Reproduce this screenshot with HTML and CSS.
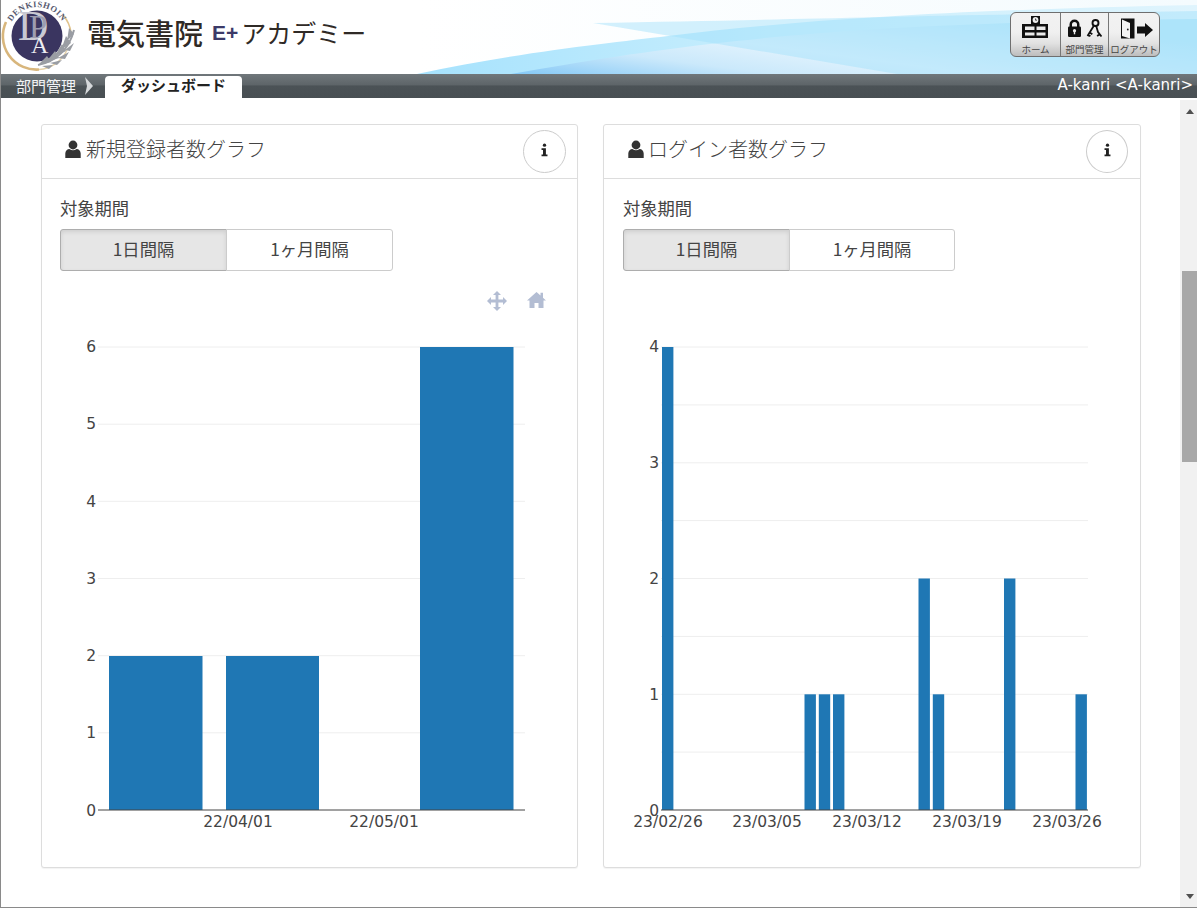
FILE: index.html
```html
<!DOCTYPE html>
<html lang="ja">
<head>
<meta charset="utf-8">
<title>ダッシュボード</title>
<link rel="stylesheet" href="styles.css">
</head>
<body>
<div class="page">
  <header class="masthead">
    <svg class="sky" viewBox="0 0 1197 74" preserveAspectRatio="none" aria-hidden="true">
      <defs>
        <linearGradient id="skyBase" x1="0" x2="1" y1="0" y2="0">
          <stop offset="0.35" stop-color="#ffffff"/>
          <stop offset="1" stop-color="#f4fbfe"/>
        </linearGradient>
        <linearGradient id="sweepA" x1="0" x2="1" y1="0" y2="0">
          <stop offset="0" stop-color="#a6e2fd"/>
          <stop offset="0.45" stop-color="#c8eefd"/>
          <stop offset="1" stop-color="#dff4fd"/>
        </linearGradient>
        <linearGradient id="sweepB" x1="0" x2="1" y1="1" y2="0.4">
          <stop offset="0" stop-color="#84c8f6"/>
          <stop offset="0.28" stop-color="#cbe9fb"/>
          <stop offset="0.5" stop-color="#e0f2fd"/>
          <stop offset="1" stop-color="#b8e7fa"/>
        </linearGradient>
      </defs>
      <rect width="1197" height="74" fill="url(#skyBase)"/>
      <path d="M417 74 C520 52 610 43 668 36 C800 20 950 10 1197 5 V74 Z" fill="url(#sweepA)"/>
      <path d="M511 74 C590 60 650 51 710 44 C820 31 950 22 1197 19 V74 Z" fill="url(#sweepB)"/>
      <path d="M593 23 C780 20 900 16 1197 11 V74 H897 Z" fill="#9fdffb" opacity="0.45"/>
    </svg>
    <div class="brand">
      <svg class="crest" viewBox="0 0 80 74" aria-hidden="true">
        <defs>
          <path id="crestArc" d="M7 36 A29 29 0 0 1 65 36"/>
        </defs>
        <path d="M5 22 A33.5 33.5 0 0 0 38 69.5" fill="none" stroke="#d8b67c" stroke-width="2.6"/>
        <path d="M38 69.5 A33.5 33.5 0 0 0 66 50" fill="none" stroke="#e7d3aa" stroke-width="1.5"/>
        <path d="M62 15 A33 33 0 0 1 70 33" fill="none" stroke="#e2c48c" stroke-width="1.6"/>
        <circle cx="36" cy="36" r="25.5" fill="#3a3560"/>
        <text class="crest-ring"><textPath href="#crestArc" startOffset="50%" text-anchor="middle">DENKISHOIN</textPath></text>
        <text class="crest-d" x="17" y="40">D</text>
        <text class="crest-p" x="28" y="38">P</text>
        <text class="crest-a" x="30" y="53">A</text>
        <path d="M37 65 C54 62 68 50 73 30" fill="none" stroke="#9a9da3" stroke-width="2"/>
        <path d="M37 65 l9 -9 l4 6 Z M45 62 l9 -11 l4 7 Z M53 57 l8 -13 l4 7 Z M60 50 l5 -14 l5 7 Z M66 41 l2 -13 l5 6 Z M41 66 l11 -1 l-4 4 Z M49 63 l12 -3 l-5 5 Z M57 58 l11 -6 l-4 7 Z M64 50 l9 -7 l-4 8 Z" fill="#9a9da3"/>
      </svg>
      <div class="brand-name">電気書院</div>
      <div class="brand-eplus">E+</div>
      <div class="brand-academy">アカデミー</div>
    </div>
    <nav class="quick">
      <a class="quick-item">
        <svg class="quick-icon" viewBox="0 0 49 24" aria-hidden="true">
          <path d="M20 1 H29 V9 H37 V23 H11 V9 H20 Z" fill="#111"/>
          <circle cx="24.5" cy="5" r="2.9" fill="#eee"/>
          <path d="M24.5 3.5 V5.2 H26" fill="none" stroke="#111" stroke-width="0.7"/>
          <path d="M14 11.5 H23.5 V15 H14 Z M25.5 11.5 H34.5 V15 H25.5 Z M14 17.5 H23.5 V20.5 H14 Z M25.5 17.5 H34.5 V20.5 H25.5 Z" fill="#ececec"/>
        </svg>
        <span class="quick-label">ホーム</span>
      </a>
      <a class="quick-item">
        <svg class="quick-icon" viewBox="0 0 47 24" aria-hidden="true">
          <path d="M8.5 12 V9.5 a5 5 0 0 1 10 0 V12 H16 V9.5 a2.5 2.5 0 0 0 -5 0 V12 Z" fill="#111"/>
          <rect x="7" y="11.5" width="13" height="10.5" rx="1.2" fill="#111"/>
          <circle cx="13.5" cy="15.7" r="1.6" fill="#eee"/>
          <rect x="12.8" y="15.7" width="1.4" height="3.6" fill="#eee"/>
          <circle cx="34.5" cy="8" r="3" fill="none" stroke="#111" stroke-width="1.9"/>
          <path d="M33 10.5 L26.5 21 M28.7 17.5 l2.6 1.7 M27.2 19.8 l2.2 1.4 M35.2 11 L37 17 L40.5 21.5 M38.5 19.4 l-2.4 1.7" fill="none" stroke="#111" stroke-width="1.8"/>
        </svg>
        <span class="quick-label">部門管理</span>
      </a>
      <a class="quick-item">
        <svg class="quick-icon" viewBox="0 0 50 24" aria-hidden="true">
          <path d="M12 3.5 H25.5 V23.5 H12 Z" fill="#111"/>
          <path d="M13 4.5 L21 8 V23.5 L13 21 Z" fill="#f4f4f4"/>
          <circle cx="18.8" cy="14.5" r="0.9" fill="#222"/>
          <path d="M28 11.5 H36 V8 L44 15 L36 22 V18.5 H28 Z" fill="#111"/>
        </svg>
        <span class="quick-label">ログアウト</span>
      </a>
    </nav>
  </header>
  <div class="crumbs">
    <span class="crumb">部門管理</span>
    <svg class="crumb-sep" viewBox="0 0 8 18" aria-hidden="true"><path d="M0 0 L8 9 L0 18 L2 9 Z" fill="#d5d8da"/></svg>
    <span class="crumb-current">ダッシュボード</span>
    <span class="user">A-kanri &lt;A-kanri&gt;</span>
  </div>
  <div class="workspace">
    <main class="content">
      <section class="card">
        <div class="card-head">
          <h2 class="card-title">
            <svg class="user-icon" viewBox="0 0 16 18" aria-hidden="true"><circle cx="8" cy="5" r="4.4" fill="#333"/><path d="M0.3 18 V13.5 C0.3 10.8 2.4 9 4.4 9 C6.8 10.7 9.2 10.7 11.6 9 C13.6 9 15.7 10.8 15.7 13.5 V18 Z" fill="#333"/></svg>
            新規登録者数グラフ
          </h2>
          <button class="info-btn" type="button">
            <svg class="info-icon" viewBox="0 0 8 15" aria-hidden="true"><circle cx="4" cy="2" r="1.9" fill="#222"/><path d="M0.6 5.5 H5.6 V12.5 H7.4 V14.6 H0.6 V12.5 H2.3 V7.6 H0.6 Z" fill="#222"/></svg>
          </button>
        </div>
        <div class="card-body">
          <div class="field-label">対象期間</div>
          <div class="segmented">
            <button class="seg seg-on" type="button">1日間隔</button>
            <button class="seg" type="button">1ヶ月間隔</button>
          </div>
          <svg class="chart" viewBox="0 0 498 588" aria-hidden="true">
            <g class="modebar">
              <path d="M437 8 l-4 4 h2.6 v4.6 h-4.6 v-2.6 l-4 4 l4 4 v-2.6 h4.6 v4.6 h-2.6 l4 4 l4 -4 h-2.6 v-4.6 h4.6 v2.6 l4 -4 l-4 -4 v2.6 h-4.6 v-4.6 h2.6 Z"/>
              <path d="M476.5 9 l-9.5 8.5 h2.5 v7.5 h5 v-5 h4 v5 h5 v-7.5 h2.5 l-3 -2.8 v-5 h-2.5 v2.8 Z"/>
            </g>
            <g class="grid">
              <line x1="38" x2="465" y1="64" y2="64"/>
              <line x1="38" x2="465" y1="141.2" y2="141.2"/>
              <line x1="38" x2="465" y1="218.3" y2="218.3"/>
              <line x1="38" x2="465" y1="295.5" y2="295.5"/>
              <line x1="38" x2="465" y1="372.7" y2="372.7"/>
              <line x1="38" x2="465" y1="449.8" y2="449.8"/>
            </g>
            <g class="bars">
              <rect x="49" y="373" width="93.5" height="154"/>
              <rect x="166" y="373" width="93" height="154"/>
              <rect x="360" y="64" width="93.5" height="463"/>
            </g>
            <line class="axis" x1="38" x2="465" y1="527" y2="527"/>
            <g class="ticks ticks-y">
              <text x="36" y="69">6</text>
              <text x="36" y="146">5</text>
              <text x="36" y="224">4</text>
              <text x="36" y="301">3</text>
              <text x="36" y="378">2</text>
              <text x="36" y="455">1</text>
              <text x="36" y="533">0</text>
            </g>
            <g class="ticks ticks-x">
              <text x="178" y="544">22/04/01</text>
              <text x="324" y="544">22/05/01</text>
            </g>
          </svg>
        </div>
      </section>
      <section class="card">
        <div class="card-head">
          <h2 class="card-title">
            <svg class="user-icon" viewBox="0 0 16 18" aria-hidden="true"><circle cx="8" cy="5" r="4.4" fill="#333"/><path d="M0.3 18 V13.5 C0.3 10.8 2.4 9 4.4 9 C6.8 10.7 9.2 10.7 11.6 9 C13.6 9 15.7 10.8 15.7 13.5 V18 Z" fill="#333"/></svg>
            ログイン者数グラフ
          </h2>
          <button class="info-btn" type="button">
            <svg class="info-icon" viewBox="0 0 8 15" aria-hidden="true"><circle cx="4" cy="2" r="1.9" fill="#222"/><path d="M0.6 5.5 H5.6 V12.5 H7.4 V14.6 H0.6 V12.5 H2.3 V7.6 H0.6 Z" fill="#222"/></svg>
          </button>
        </div>
        <div class="card-body">
          <div class="field-label">対象期間</div>
          <div class="segmented">
            <button class="seg seg-on" type="button">1日間隔</button>
            <button class="seg" type="button">1ヶ月間隔</button>
          </div>
          <svg class="chart" viewBox="0 0 498 588" aria-hidden="true">
            <g class="grid">
              <line x1="38" x2="465" y1="64" y2="64"/>
              <line x1="38" x2="465" y1="121.9" y2="121.9"/>
              <line x1="38" x2="465" y1="179.8" y2="179.8"/>
              <line x1="38" x2="465" y1="237.6" y2="237.6"/>
              <line x1="38" x2="465" y1="295.5" y2="295.5"/>
              <line x1="38" x2="465" y1="353.4" y2="353.4"/>
              <line x1="38" x2="465" y1="411.3" y2="411.3"/>
              <line x1="38" x2="465" y1="469.1" y2="469.1"/>
            </g>
            <g class="bars">
              <rect x="39" y="64" width="11.4" height="463"/>
              <rect x="181.5" y="411.3" width="11.4" height="115.7"/>
              <rect x="195.8" y="411.3" width="11.4" height="115.7"/>
              <rect x="210" y="411.3" width="11.4" height="115.7"/>
              <rect x="295.5" y="295.5" width="11.4" height="231.5"/>
              <rect x="309.8" y="411.3" width="11.4" height="115.7"/>
              <rect x="381" y="295.5" width="11.4" height="231.5"/>
              <rect x="452.5" y="411.3" width="11.4" height="115.7"/>
            </g>
            <line class="axis" x1="38" x2="465" y1="527" y2="527"/>
            <g class="ticks ticks-y">
              <text x="36" y="69">4</text>
              <text x="36" y="185">3</text>
              <text x="36" y="301">2</text>
              <text x="36" y="417">1</text>
              <text x="36" y="533">0</text>
            </g>
            <g class="ticks ticks-x">
              <text x="45" y="544">23/02/26</text>
              <text x="144" y="544">23/03/05</text>
              <text x="244" y="544">23/03/12</text>
              <text x="344" y="544">23/03/19</text>
              <text x="444" y="544">23/03/26</text>
            </g>
          </svg>
        </div>
      </section>
    </main>
    <div class="scrollbar">
      <span class="arrow-up"></span>
      <div class="scroll-track"><div class="scroll-thumb"></div></div>
      <span class="arrow-down"></span>
    </div>
  </div>
</div>
</body>
</html>
```
FILE: styles.css
```css
* { box-sizing: border-box; }
html, body { margin: 0; padding: 0; height: 100%; }
body {
  background: #fff;
  color: #333;
  font-family: "Liberation Sans", "Noto Sans CJK JP", sans-serif;
  overflow: hidden;
}
.page {
  width: 1197px;
  height: 908px;
  display: flex;
  flex-direction: column;
  border-left: 1px solid #8a8a8a;
  border-bottom: 1px solid #8a8a8a;
}

/* masthead */
.masthead {
  position: relative;
  height: 74px;
  flex: none;
  display: flex;
  align-items: flex-start;
  justify-content: space-between;
  padding: 12px 37px 0 0;
  overflow: hidden;
}
.sky { position: absolute; left: -1px; top: 0; width: 1197px; height: 74px; }
.brand {
  position: relative;
  display: flex;
  align-items: center;
  height: 50px;
  margin-top: -5px;
}
.crest { width: 80px; height: 74px; margin: -7px 6px -17px 0; flex: none; }
.crest-ring { font: 700 8.5px "Liberation Serif", serif; fill: #55586e; letter-spacing: 0.6px; }
.crest-d { font: 400 42px "Liberation Serif", serif; fill: #c9c9d3; }
.crest-p { font: 400 33px "Liberation Serif", serif; fill: #9d9db0; }
.crest-a { font: 400 24px "Liberation Serif", serif; fill: #eeeef2; }
.brand-name {
  font: 500 29px/1 "Noto Sans CJK JP", sans-serif;
  color: #2f2a26;
}
.brand-eplus {
  font: 700 21px/1 "Liberation Sans", sans-serif;
  color: #3c3a68;
  margin: 1px 3px 0 9px;
}
.brand-academy {
  font: 400 25px/1 "Noto Sans CJK JP", sans-serif;
  color: #2f2a26;
}
.quick {
  position: relative;
  display: flex;
  height: 45px;
  border: 1px solid #6f6f6f;
  border-radius: 6px;
  background: linear-gradient(#f2f2f2, #f0f0f0 45%, #e2e2e2 70%, #bdbdbd);
  overflow: hidden;
}
.quick-item {
  width: 48px;
  display: flex;
  flex-direction: column;
  align-items: center;
  border-left: 1px solid #777;
  padding-top: 2px;
}
.quick-item:first-child { width: 49px; border-left: 0; }
.quick-item:last-child { width: 51px; }
.quick-icon { height: 24px; width: 100%; flex: none; }
.quick-label {
  font: 400 9.5px/10px "Noto Sans CJK JP", sans-serif;
  color: #444;
  white-space: nowrap;
  margin-top: 5px;
}

/* breadcrumb bar */
.crumbs {
  height: 24px;
  flex: none;
  display: flex;
  align-items: flex-end;
  padding-left: 15px;
  background: linear-gradient(#70777b, #5e6569 45%, #4b5256 50%, #484f53);
  color: #fff;
  font: 400 15px/22px "Noto Sans CJK JP", sans-serif;
}
.crumb { color: #f2f4f5; height: 24px; line-height: 23px; }
.crumb-sep { width: 8px; height: 18px; margin: 0 12px 3px 9px; flex: none; }
.crumb-current {
  width: 137px;
  height: 22px;
  background: #fff;
  color: #222;
  font-weight: 700;
  font-size: 15px;
  line-height: 18px;
  text-align: center;
  border-radius: 4px 4px 0 0;
}
.user {
  margin-left: auto;
  padding-right: 4px;
  height: 24px;
  font: 400 15px/22px "DejaVu Sans", sans-serif;
  color: #fff;
}

/* working area */
.workspace {
  flex: 1;
  min-height: 0;
  display: flex;
}
.content {
  flex: 1;
  display: flex;
  gap: 25px;
  align-items: flex-start;
  padding: 26px 39px 0 40px;
}
.card {
  width: 537px;
  flex: none;
  height: 744px;
  border: 1px solid #ddd;
  border-radius: 3px;
  box-shadow: 0 1px 1px rgba(0, 0, 0, 0.05);
  background: #fff;
}
.card + .card { width: 538px; }
.card-head {
  height: 54px;
  border-bottom: 1px solid #ddd;
  display: flex;
  align-items: center;
  justify-content: space-between;
  padding: 0 11px 0 23px;
}
.card + .card .card-head { padding: 0 12px 0 24px; }
.card-title {
  margin: 0 0 5px;
  font: 300 20px/1.2 "Noto Sans CJK JP", sans-serif;
  color: #444;
  display: flex;
  align-items: center;
  gap: 5px;
}
.card + .card .card-title { gap: 4px; }
.user-icon { width: 16px; height: 18px; flex: none; }
.info-btn {
  width: 43px;
  height: 43px;
  padding: 0;
  border: 1px solid #ccc;
  border-radius: 50%;
  background: #fff;
  display: flex;
  align-items: center;
  justify-content: center;
}
.card + .card .info-btn { width: 42px; }
.info-icon { width: 7px; height: 14px; margin-top: -4px; }
.card-body { padding: 17px 18px 0; }
.card + .card .card-body { padding-left: 19px; }
.field-label {
  font: 400 17.3px/24px "Noto Sans CJK JP", sans-serif;
  color: #444;
}
.segmented {
  display: flex;
  width: 333px;
  height: 42px;
  margin-top: 9px;
}
.card + .card .segmented { width: 332px; }
.seg {
  flex: 1;
  border: 1px solid #ccc;
  background: #fff;
  color: #444;
  font: 400 17.3px/1 "Noto Sans CJK JP", sans-serif;
  padding: 0 0 2px;
  border-radius: 0 3px 3px 0;
  margin-left: -1px;
}
.seg-on {
  flex: none;
  width: 167px;
  margin-left: 0;
  background: #e6e6e6;
  border-color: #adadad;
  border-radius: 3px 0 0 3px;
  box-shadow: inset 0 2px 4px rgba(0, 0, 0, 0.1);
}

/* charts */
.chart {
  display: block;
  width: 498px;
  height: 588px;
  margin-top: 12px;
  overflow: visible;
}
.grid line { stroke: #eee; stroke-width: 1; }
.bars rect { fill: #1f77b4; }
.axis { stroke: #444; stroke-width: 1; }
.ticks text { font: 400 15.5px "DejaVu Sans", sans-serif; fill: #444; }
.ticks-y text { text-anchor: end; }
.ticks-x text { text-anchor: middle; }
.modebar path { fill: #b3bdd3; }

/* scrollbar */
.scrollbar {
  width: 17px;
  flex: none;
  margin-top: 2px;
  padding-left: 2px;
  background: #f1f1f1;
  display: flex;
  flex-direction: column;
  align-items: center;
}
.arrow-up, .arrow-down {
  width: 0;
  height: 0;
  flex: none;
  border-left: 4px solid transparent;
  border-right: 4px solid transparent;
}
.arrow-up { border-bottom: 5px solid #505050; margin: 9px 0 0; }
.arrow-down { border-top: 5px solid #505050; margin: 0 0 8px; }
.scroll-track { flex: 1; width: 100%; padding-top: 157px; }
.scroll-thumb { height: 191px; background: #a8a8a8; }
```
